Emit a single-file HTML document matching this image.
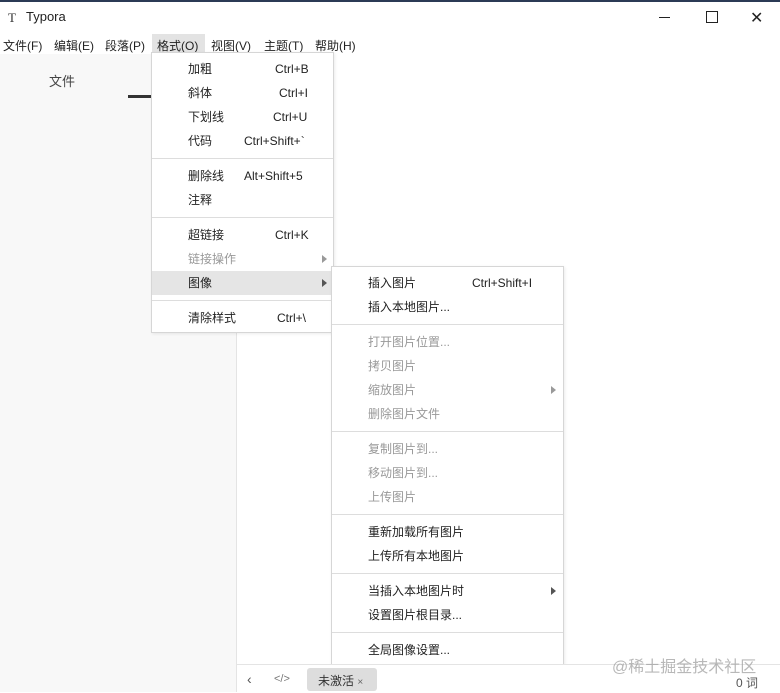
<html><head><style>
body{margin:0;width:780px;height:692px;position:relative;overflow:hidden;background:#fff;font-family:"Liberation Sans","Noto Sans CJK SC",sans-serif;font-size:12px;color:#222}
.a{position:absolute;white-space:nowrap}
.menu{position:absolute;background:#fff;border:1px solid #d6d6d6;box-shadow:1px 1px 3px rgba(0,0,0,.08)}
.it{position:absolute;left:0;right:0;height:24px;line-height:24px}
.it .l{position:absolute;left:36px}
.it .r{position:absolute}
.g{color:#999}
.sep{position:absolute;left:0;right:0;height:1px;background:#ddd}
.arr{position:absolute;width:0;height:0;border-left:5px solid #999;border-top:4px solid transparent;border-bottom:4px solid transparent}
.mb{position:absolute;top:37px}
</style></head><body>
<div class="a" style="left:0;top:0;width:780px;height:2px;background:#2b3a55"></div>
<div class="a" style="left:8px;top:10px;font-family:'Liberation Serif',serif;font-size:13px;color:#333">T</div>
<div class="a" style="left:26px;top:9px;font-size:13px">Typora</div>
<div class="a" style="left:659px;top:17px;width:11px;height:1px;background:#222"></div>
<div class="a" style="left:706px;top:11px;width:10px;height:10px;border:1px solid #222"></div>
<div class="a" style="left:750px;top:8px;font-size:16px;font-weight:300">✕</div>
<div class="a" style="left:152px;top:34px;width:53px;height:20px;background:#e3e3e3"></div>
<div class="mb" style="left:3px">文件(F)</div>
<div class="mb" style="left:54px">编辑(E)</div>
<div class="mb" style="left:105px">段落(P)</div>
<div class="mb" style="left:157px">格式(O)</div>
<div class="mb" style="left:211px">视图(V)</div>
<div class="mb" style="left:264px">主题(T)</div>
<div class="mb" style="left:315px">帮助(H)</div>
<div class="a" style="left:0;top:54px;width:236px;height:638px;background:#f8f8f8;border-right:1px solid #e4e4e4"></div>
<div class="a" style="left:49px;top:71px;font-size:13px;color:#444">文件</div>
<div class="a" style="left:128px;top:95px;width:24px;height:3px;background:#333"></div>

<div class="menu" style="left:151px;top:52px;width:181px;height:279px">
<div class="it" style="top:4px"><span class="l">加粗</span><span class="r" style="left:123px">Ctrl+B</span></div>
<div class="it" style="top:28px"><span class="l">斜体</span><span class="r" style="left:127px">Ctrl+I</span></div>
<div class="it" style="top:52px"><span class="l">下划线</span><span class="r" style="left:121px">Ctrl+U</span></div>
<div class="it" style="top:76px"><span class="l">代码</span><span class="r" style="left:92px">Ctrl+Shift+`</span></div>
<div class="sep" style="top:105px"></div>
<div class="it" style="top:111px"><span class="l">删除线</span><span class="r" style="left:92px">Alt+Shift+5</span></div>
<div class="it" style="top:135px"><span class="l">注释</span></div>
<div class="sep" style="top:164px"></div>
<div class="it" style="top:170px"><span class="l">超链接</span><span class="r" style="left:123px">Ctrl+K</span></div>
<div class="it g" style="top:194px"><span class="l">链接操作</span><span class="arr" style="left:170px;top:8px"></span></div>
<div class="it" style="top:218px;background:#e5e5e5"><span class="l">图像</span><span class="arr" style="left:170px;top:8px;border-left-color:#555"></span></div>
<div class="sep" style="top:247px"></div>
<div class="it" style="top:253px"><span class="l">清除样式</span><span class="r" style="left:125px">Ctrl+\</span></div>
</div>

<div class="menu" style="left:331px;top:266px;width:231px;height:410px">
<div class="it" style="top:4px"><span class="l">插入图片</span><span class="r" style="left:140px">Ctrl+Shift+I</span></div>
<div class="it" style="top:28px"><span class="l">插入本地图片...</span></div>
<div class="sep" style="top:57px"></div>
<div class="it g" style="top:63px"><span class="l">打开图片位置...</span></div>
<div class="it g" style="top:87px"><span class="l">拷贝图片</span></div>
<div class="it g" style="top:111px"><span class="l">缩放图片</span><span class="arr" style="left:219px;top:8px"></span></div>
<div class="it g" style="top:135px"><span class="l">删除图片文件</span></div>
<div class="sep" style="top:164px"></div>
<div class="it g" style="top:170px"><span class="l">复制图片到...</span></div>
<div class="it g" style="top:194px"><span class="l">移动图片到...</span></div>
<div class="it g" style="top:218px"><span class="l">上传图片</span></div>
<div class="sep" style="top:247px"></div>
<div class="it" style="top:253px"><span class="l">重新加载所有图片</span></div>
<div class="it" style="top:277px"><span class="l">上传所有本地图片</span></div>
<div class="sep" style="top:306px"></div>
<div class="it" style="top:312px"><span class="l">当插入本地图片时</span><span class="arr" style="left:219px;top:8px;border-left-color:#555"></span></div>
<div class="it" style="top:336px"><span class="l">设置图片根目录...</span></div>
<div class="sep" style="top:365px"></div>
<div class="it" style="top:371px"><span class="l">全局图像设置...</span></div>
</div>

<div class="a" style="left:237px;top:664px;width:543px;height:28px;border-top:1px solid #e4e4e4;background:#fff"></div>
<div class="a" style="left:247px;top:671px;font-size:14px;color:#555">‹</div>
<div class="a" style="left:274px;top:673px;font-size:11px;color:#777">&lt;/&gt;</div>
<div class="a" style="left:307px;top:668px;width:70px;height:23px;background:#ddd;border-radius:3px"></div>
<div class="a" style="left:318px;top:672px;color:#333">未激活 <span style="font-size:10px;color:#666">×</span></div>
<div class="a" style="left:736px;top:674px;color:#555">0 词</div>
<div class="a" style="left:612px;top:653px;font-size:16px;color:rgba(160,160,160,.75)">@稀土掘金技术社区</div>
</body></html>
